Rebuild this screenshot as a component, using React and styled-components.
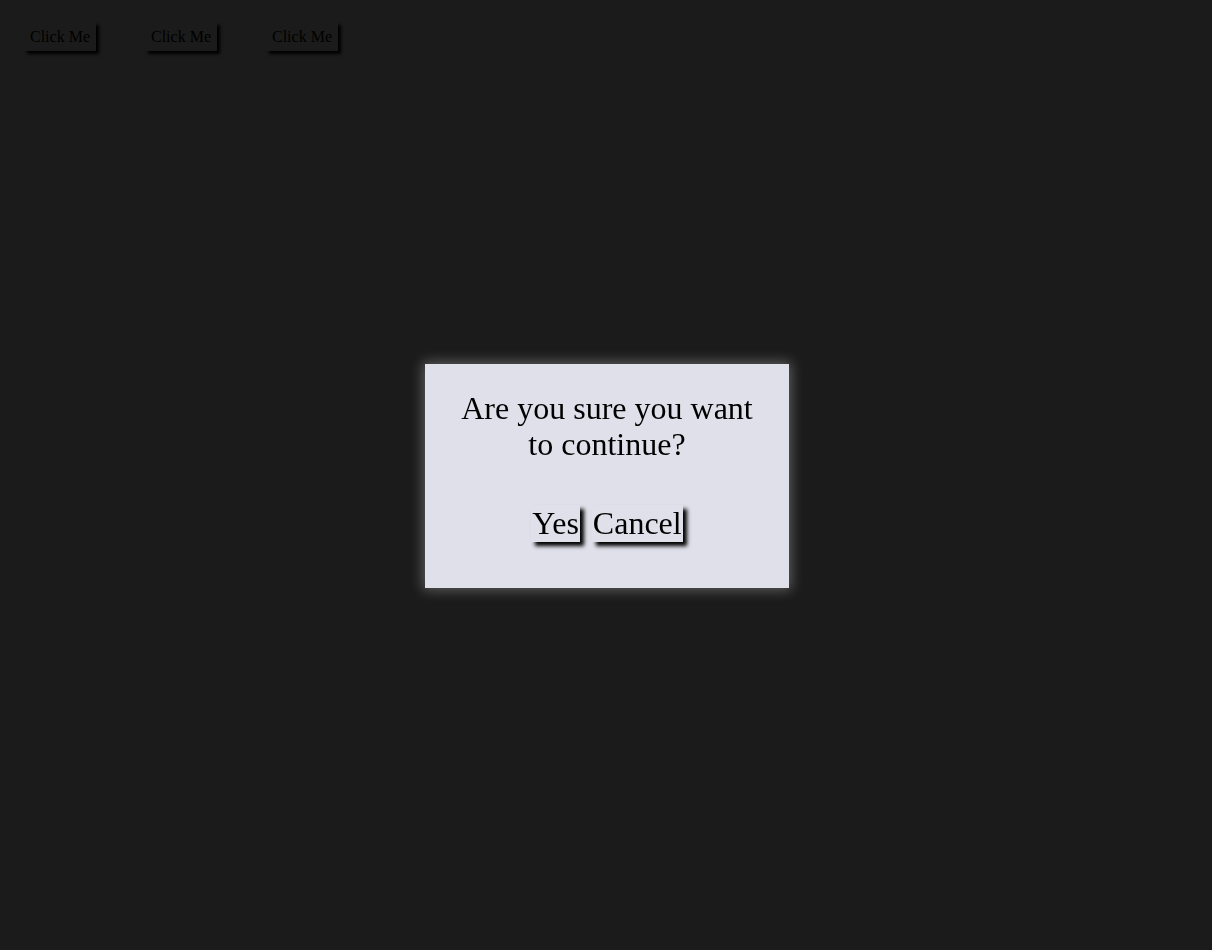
import React, { useState } from 'react';
import styled, { createGlobalStyle } from 'styled-components';

const GlobalStyle = createGlobalStyle`
  html, body {
    margin: 0;
    height: 100%;
    background: #1b1b1b;
  }
  body {
    font-family: "Liberation Serif", "Times New Roman", serif;
  }
`;

export default function App() {
  const [open, setOpen] = useState(true);

  return (
    <>
      <GlobalStyle />
      <StyledPage>
        <StyledToolbar>
          <StyledSmallButton onClick={() => setOpen(true)}>Click Me</StyledSmallButton>
          <StyledSmallButton onClick={() => setOpen(true)}>Click Me</StyledSmallButton>
          <StyledSmallButton onClick={() => setOpen(true)}>Click Me</StyledSmallButton>
        </StyledToolbar>

        {open && (
          <StyledModal>
            <StyledMessage>Are you sure you want to continue?</StyledMessage>
            <StyledActions>
              <StyledModalButton onClick={() => setOpen(false)}>Yes</StyledModalButton>
              <StyledModalButton onClick={() => setOpen(false)}>Cancel</StyledModalButton>
            </StyledActions>
          </StyledModal>
        )}
      </StyledPage>
    </>
  );
}

const StyledPage = styled.div`
  min-height: 950px;
  padding: 22px 24px;
  box-sizing: border-box;
`
const StyledToolbar = styled.div`
  display: flex;
  gap: 49px;
`
const StyledSmallButton = styled.button`
  width: 72px;
  height: 29px;
  padding: 0;
  border: none;
  background: #1b1b1b;
  color: #000;
  font-family: "Liberation Serif", serif;
  font-size: 16px;
  box-shadow: 3px 3px 3px #000;
  cursor: pointer;
`
const StyledModal = styled.div`
  position: fixed;
  top: 50%;
  left: 50%;
  transform: translate(calc(-50% + 1px), calc(-50% + 1px));
  width: 364px;
  height: 224px;
  box-sizing: border-box;
  padding: 26px 32px;
  background: #e0e0ea;
  box-shadow: 0 0 12px 2px rgba(255, 255, 255, 0.3);
  display: flex;
  flex-direction: column;
  align-items: center;
`
const StyledMessage = styled.p`
  margin: 0;
  font-size: 32px;
  line-height: 36px;
  text-align: center;
  color: #000;
`
const StyledActions = styled.div`
  display: flex;
  gap: 12px;
  margin-top: 43px;
`
const StyledModalButton = styled.button`
  padding: 0 1px;
  height: 37px;
  border: none;
  background: #e0e0ea;
  color: #000;
  font-family: "Liberation Serif", serif;
  font-size: 32px;
  line-height: 37px;
  box-shadow: 4px 4px 4px #000;
  cursor: pointer;
`
